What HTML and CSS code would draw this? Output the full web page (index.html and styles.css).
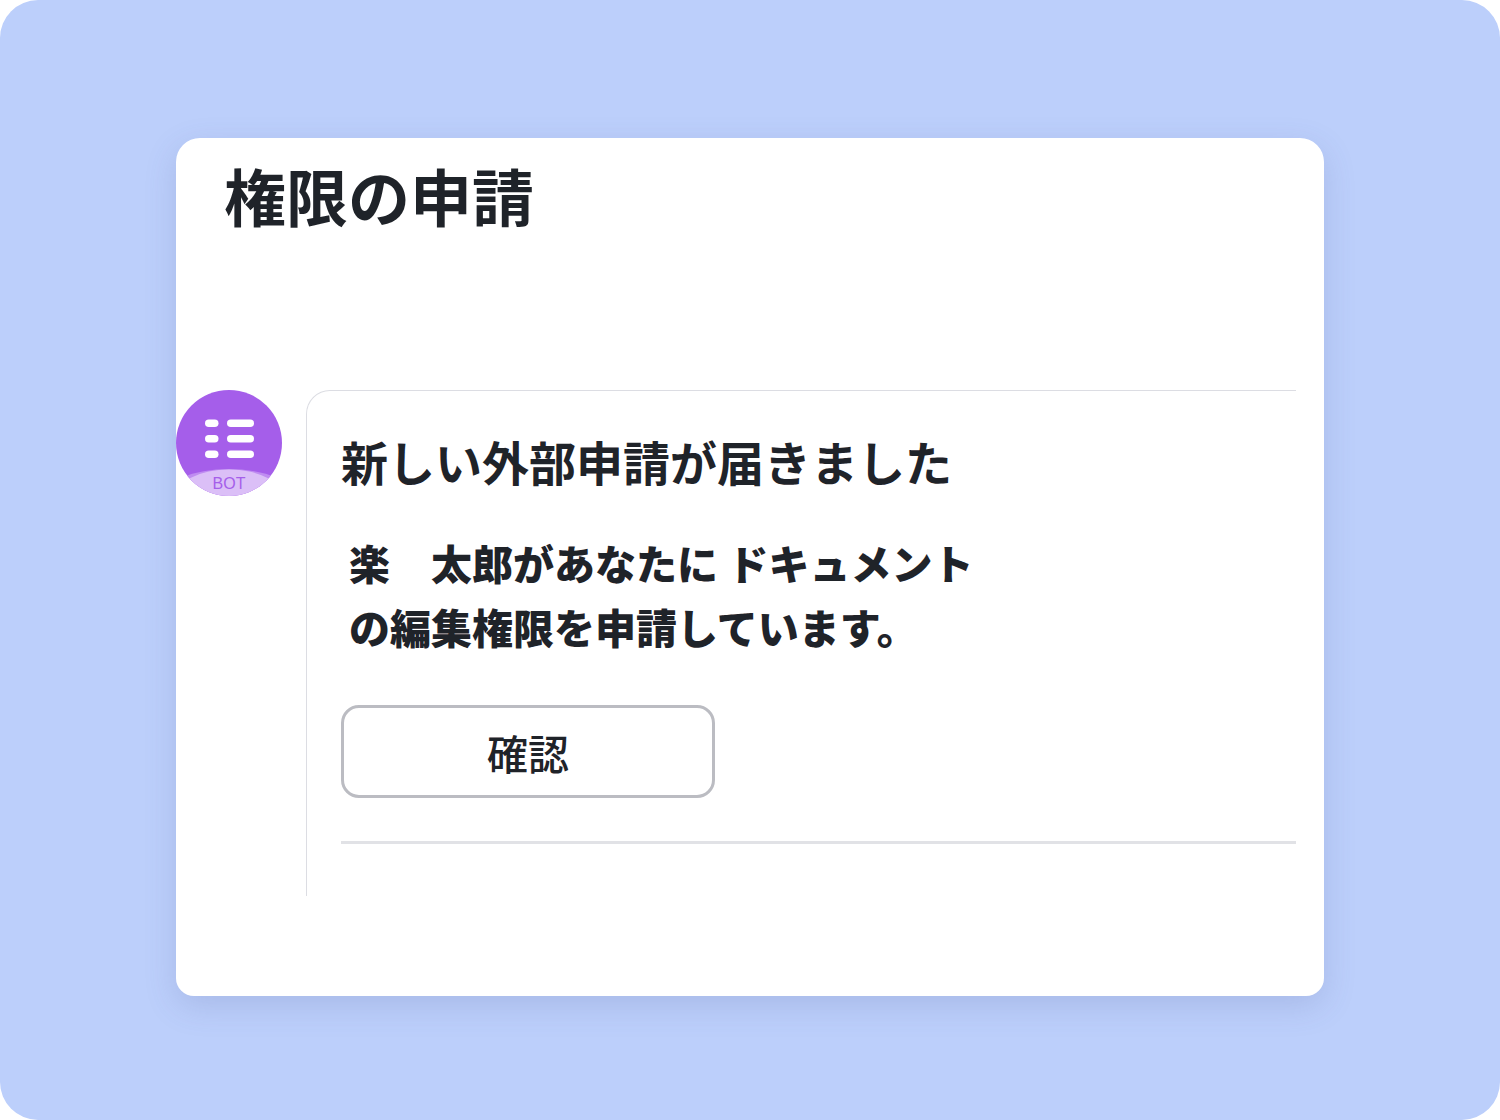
FILE: index.html
```html
<!DOCTYPE html>
<html lang="ja">
<head>
    <meta charset="UTF-8">
    <meta name="viewport" content="width=device-width, initial-scale=1.0">
    <title>権限の申請</title>
    <link rel="stylesheet" href="styles.css">
</head>
<body>

    <div class="stage">
        <main class="card">
            <h1 class="card-title">権限の申請</h1>

            <!-- Bot message -->
            <section class="message">
                <svg class="avatar" viewBox="0 0 106 106" role="img" aria-label="BOT">
                    <defs>
                        <clipPath id="avatar-clip">
                            <circle cx="53" cy="53" r="53"/>
                        </clipPath>
                    </defs>
                    <circle cx="53" cy="53" r="53" fill="#a55eea"/>
                    <g fill="#fff">
                        <rect x="29" y="29.5" width="13.5" height="7.5" rx="3.75"/>
                        <rect x="51" y="29.5" width="27" height="7.5" rx="3.75"/>
                        <rect x="29" y="45" width="13.5" height="7.5" rx="3.75"/>
                        <rect x="51" y="45" width="27" height="7.5" rx="3.75"/>
                        <rect x="29" y="60.5" width="13.5" height="7.5" rx="3.75"/>
                        <rect x="51" y="60.5" width="27" height="7.5" rx="3.75"/>
                    </g>
                    <g clip-path="url(#avatar-clip)">
                        <ellipse cx="53" cy="107" rx="66" ry="28" fill="#bf8cf1"/>
                        <ellipse cx="53" cy="107" rx="53" ry="27.5" fill="#dbbff7"/>
                    </g>
                    <text class="avatar-label" x="53" y="99" text-anchor="middle">BOT</text>
                </svg>

                <div class="bubble">
                    <h2 class="bubble-title">新しい外部申請が届きました</h2>
                    <p class="bubble-text">楽　太郎があなたに ドキュメント<br>の編集権限を申請しています。</p>
                    <button class="confirm-button" type="button">確認</button>
                    <hr class="divider">
                </div>
            </section>
        </main>
    </div>

</body>
</html>
```

FILE: styles.css
```css
/* General Styles */
* {
    box-sizing: border-box;
}

body {
    margin: 0;
    background-color: #fff;
    color: #1f2329;
    font-family: "Noto Sans CJK JP", sans-serif;
}

.stage {
    min-height: 100vh;
    padding: 138px 176px 124px;
    border-radius: 38px;
    background-color: #bccffb;
    display: flex;
}

/* Card */
.card {
    flex: 1;
    padding: 17px 28px 100px 0;
    border-radius: 24px 24px 18px 18px;
    background-color: #fff;
    box-shadow: 0 10px 32px rgba(80, 90, 150, 0.18);
}

.card-title {
    margin: 0 0 155px 48px;
    font-size: 62px;
    line-height: 80px;
    font-weight: 700;
}

/* Message */
.message {
    display: flex;
    align-items: flex-start;
    gap: 24px;
}

.avatar {
    flex: none;
    width: 106px;
    height: 106px;
}

.avatar-label {
    fill: #a55eea;
    font-family: "Liberation Sans", Arial, sans-serif;
    font-size: 16px;
}

.bubble {
    flex: 1;
    padding: 38px 0 52px 34px;
    border-top: 1px solid #dcdde3;
    border-left: 1px solid #dcdde3;
    border-top-left-radius: 24px;
}

.bubble-title {
    margin: 0 0 37px;
    font-size: 47px;
    line-height: 64px;
    font-weight: 700;
}

.bubble-text {
    margin: 0 0 47px 8px;
    font-size: 41px;
    line-height: 64px;
    font-weight: 900;
}

.confirm-button {
    display: block;
    width: 374px;
    height: 93px;
    border: 3px solid #bbbcc2;
    border-radius: 18px;
    background-color: #fff;
    color: inherit;
    font-family: inherit;
    font-size: 41px;
    font-weight: 500;
    cursor: pointer;
}

.divider {
    height: 3px;
    margin: 43px 0 0;
    border: none;
    background-color: #e1e2e6;
}
```
